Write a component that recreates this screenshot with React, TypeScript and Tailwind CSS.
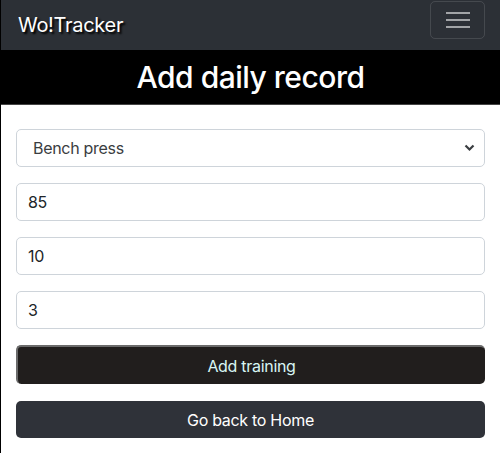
import React from 'react';

const font = { fontFamily: 'Inter, "Liberation Sans", sans-serif' };

const Field: React.FC<{ value: string }> = ({ value }) => (
  <input
    readOnly
    value={value}
    className="block w-full h-[38px] rounded-[5px] border border-[#ced4da] bg-white px-[11px] text-[16px] tracking-[-0.3px] text-[#212529] outline-none"
  />
);

export default function App() {
  return (
    <div className="min-h-[453px] bg-white border-l border-black" style={font}>
      <nav className="h-[50px] bg-[#2c3036] flex items-center justify-between pl-[17px] pr-[15px]">
        <span className="text-[20px] text-white tracking-[-0.3px] [text-shadow:2px_2px_2px_#000]">Wo!Tracker</span>
        <button className="w-[55px] h-[38px] mb-[10px] rounded-[5px] border border-[#ffffff1f] flex flex-col items-center justify-center gap-[5px]">
          <span className="block w-[24px] h-[2px] bg-[#a2a4a7]" />
          <span className="block w-[24px] h-[2px] bg-[#a2a4a7]" />
          <span className="block w-[24px] h-[2px] bg-[#a2a4a7]" />
        </button>
      </nav>
      <div className="h-[55px] bg-black border-b border-[#444] flex items-center justify-center">
        <h1 className="text-[30px] font-medium text-white tracking-[-0.5px]">Add daily record</h1>
      </div>
      <div className="px-[15px] pt-[24px] flex flex-col tracking-[-0.3px]">
        <div className="relative">
          <select className="block w-full h-[38px] appearance-none rounded-[5px] border border-[#ced4da] bg-white pl-[16px] text-[16px] tracking-[-0.3px] text-[#3a3d41] outline-none">
            <option>Bench press</option>
          </select>
          <svg className="absolute right-[10px] top-[15px]" width="11" height="8" viewBox="0 0 11 8">
            <path d="M1.5 1.5 L5.5 5.5 L9.5 1.5" stroke="#3a3d41" strokeWidth="2.2" fill="none" />
          </svg>
        </div>
        <div className="mt-[16px]"><Field value="85" /></div>
        <div className="mt-[16px]"><Field value="10" /></div>
        <div className="mt-[16px]"><Field value="3" /></div>
        <button className="mt-[16px] h-[39px] w-full rounded-[5px] bg-[#211e1d] border-t-2 border-l-2 border-[#6b6b6b] text-[16px] text-[#d8f6f4]">
          Add training
        </button>
        <button className="mt-[17px] h-[37px] w-full rounded-[5px] bg-[#2f3239] text-[16px] text-white">
          Go back to Home
        </button>
      </div>
    </div>
  );
}
